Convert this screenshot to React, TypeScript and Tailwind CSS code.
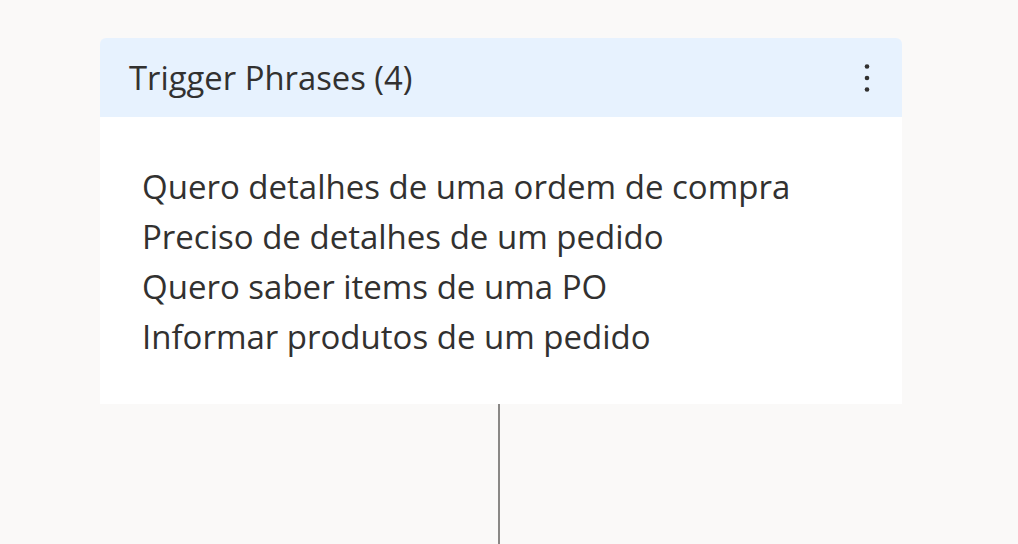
export default function App() {
  const phrases = [
    'Quero detalhes de uma ordem de compra',
    'Preciso de detalhes de um pedido',
    'Quero saber items de uma PO',
    'Informar produtos de um pedido',
  ];

  return (
    <div
      className="w-[1018px] h-[544px] bg-[#faf9f8] overflow-hidden flex flex-col items-start pl-[100px] pt-[38px]"
      style={{ fontFamily: '"Open Sans", "Noto Sans", sans-serif' }}
    >
      <div className="w-[802px] flex flex-col">
        <div className="w-full rounded-t-[6px] bg-[#e7f2fe] h-[79px] flex items-center justify-between pl-[29px] pr-[32px] pt-[2px]">
          <span className="text-[32.8px] text-[#323130] leading-none">Trigger Phrases (4)</span>
          <svg width="6" height="28" viewBox="0 0 6 28" className="fill-[#323130] mb-[2px]">
            <circle cx="3" cy="2.5" r="2.3" />
            <circle cx="3" cy="14" r="2.3" />
            <circle cx="3" cy="25.5" r="2.3" />
          </svg>
        </div>
        <div className="w-full bg-white pt-[45px] pb-[42px] pl-[42px] flex flex-col">
          {phrases.map((p) => (
            <div key={p} className="text-[33px] leading-[50px] text-[#323130]">
              {p}
            </div>
          ))}
        </div>
        <div className="w-full flex justify-center">
          <div className="w-[2px] h-[141px] bg-[#8a8886] ml-[-4px]" />
        </div>
      </div>
    </div>
  );
}
